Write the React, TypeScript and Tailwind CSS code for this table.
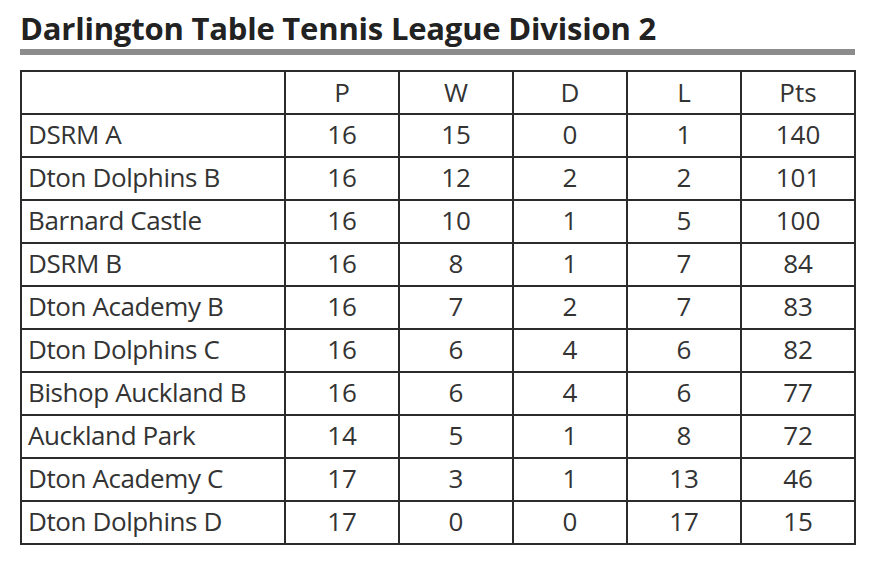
const rows: [string, number, number, number, number, number][] = [
  ["DSRM A", 16, 15, 0, 1, 140],
  ["Dton Dolphins B", 16, 12, 2, 2, 101],
  ["Barnard Castle", 16, 10, 1, 5, 100],
  ["DSRM B", 16, 8, 1, 7, 84],
  ["Dton Academy B", 16, 7, 2, 7, 83],
  ["Dton Dolphins C", 16, 6, 4, 6, 82],
  ["Bishop Auckland B", 16, 6, 4, 6, 77],
  ["Auckland Park", 14, 5, 1, 8, 72],
  ["Dton Academy C", 17, 3, 1, 13, 46],
  ["Dton Dolphins D", 17, 0, 0, 17, 15],
];

const headers = ["P", "W", "D", "L", "Pts"];

export default function App() {
  return (
    <div className="w-[870px] h-[570px] bg-white pl-5 pt-[8px] font-['Open_Sans',sans-serif] text-[#333]">
      <h1 className="text-[31px] font-bold leading-[40px] tracking-[-0.2px] text-[#222]">
        Darlington Table Tennis League Division 2
      </h1>
      <div className="mt-[1px] h-[6px] w-[835px] bg-[#8c8c8c]" />
      <table className="mt-[15px] w-[834px] table-fixed border-collapse border-2 border-[#2b2b2b] text-[26px]">
        <colgroup>
          <col className="w-[264px]" />
          <col className="w-[114px]" />
          <col className="w-[114px]" />
          <col className="w-[114px]" />
          <col className="w-[114px]" />
          <col className="w-[114px]" />
        </colgroup>
        <thead>
          <tr className="h-[43px]">
            <th className="border-2 border-[#2b2b2b]" />
            {headers.map((h) => (
              <th key={h} className="border-2 border-[#2b2b2b] pb-[2px] text-center font-normal leading-none">
                {h}
              </th>
            ))}
          </tr>
        </thead>
        <tbody>
          {rows.map((r) => (
            <tr key={r[0]} className="h-[43px]">
              <td className="border-2 border-[#2b2b2b] px-[6px] pb-[3px] leading-none tracking-[-0.4px]">{r[0]}</td>
              {r.slice(1).map((v, i) => (
                <td key={i} className="border-2 border-[#2b2b2b] pb-[3px] text-center leading-none">
                  {v}
                </td>
              ))}
            </tr>
          ))}
        </tbody>
      </table>
    </div>
  );
}
